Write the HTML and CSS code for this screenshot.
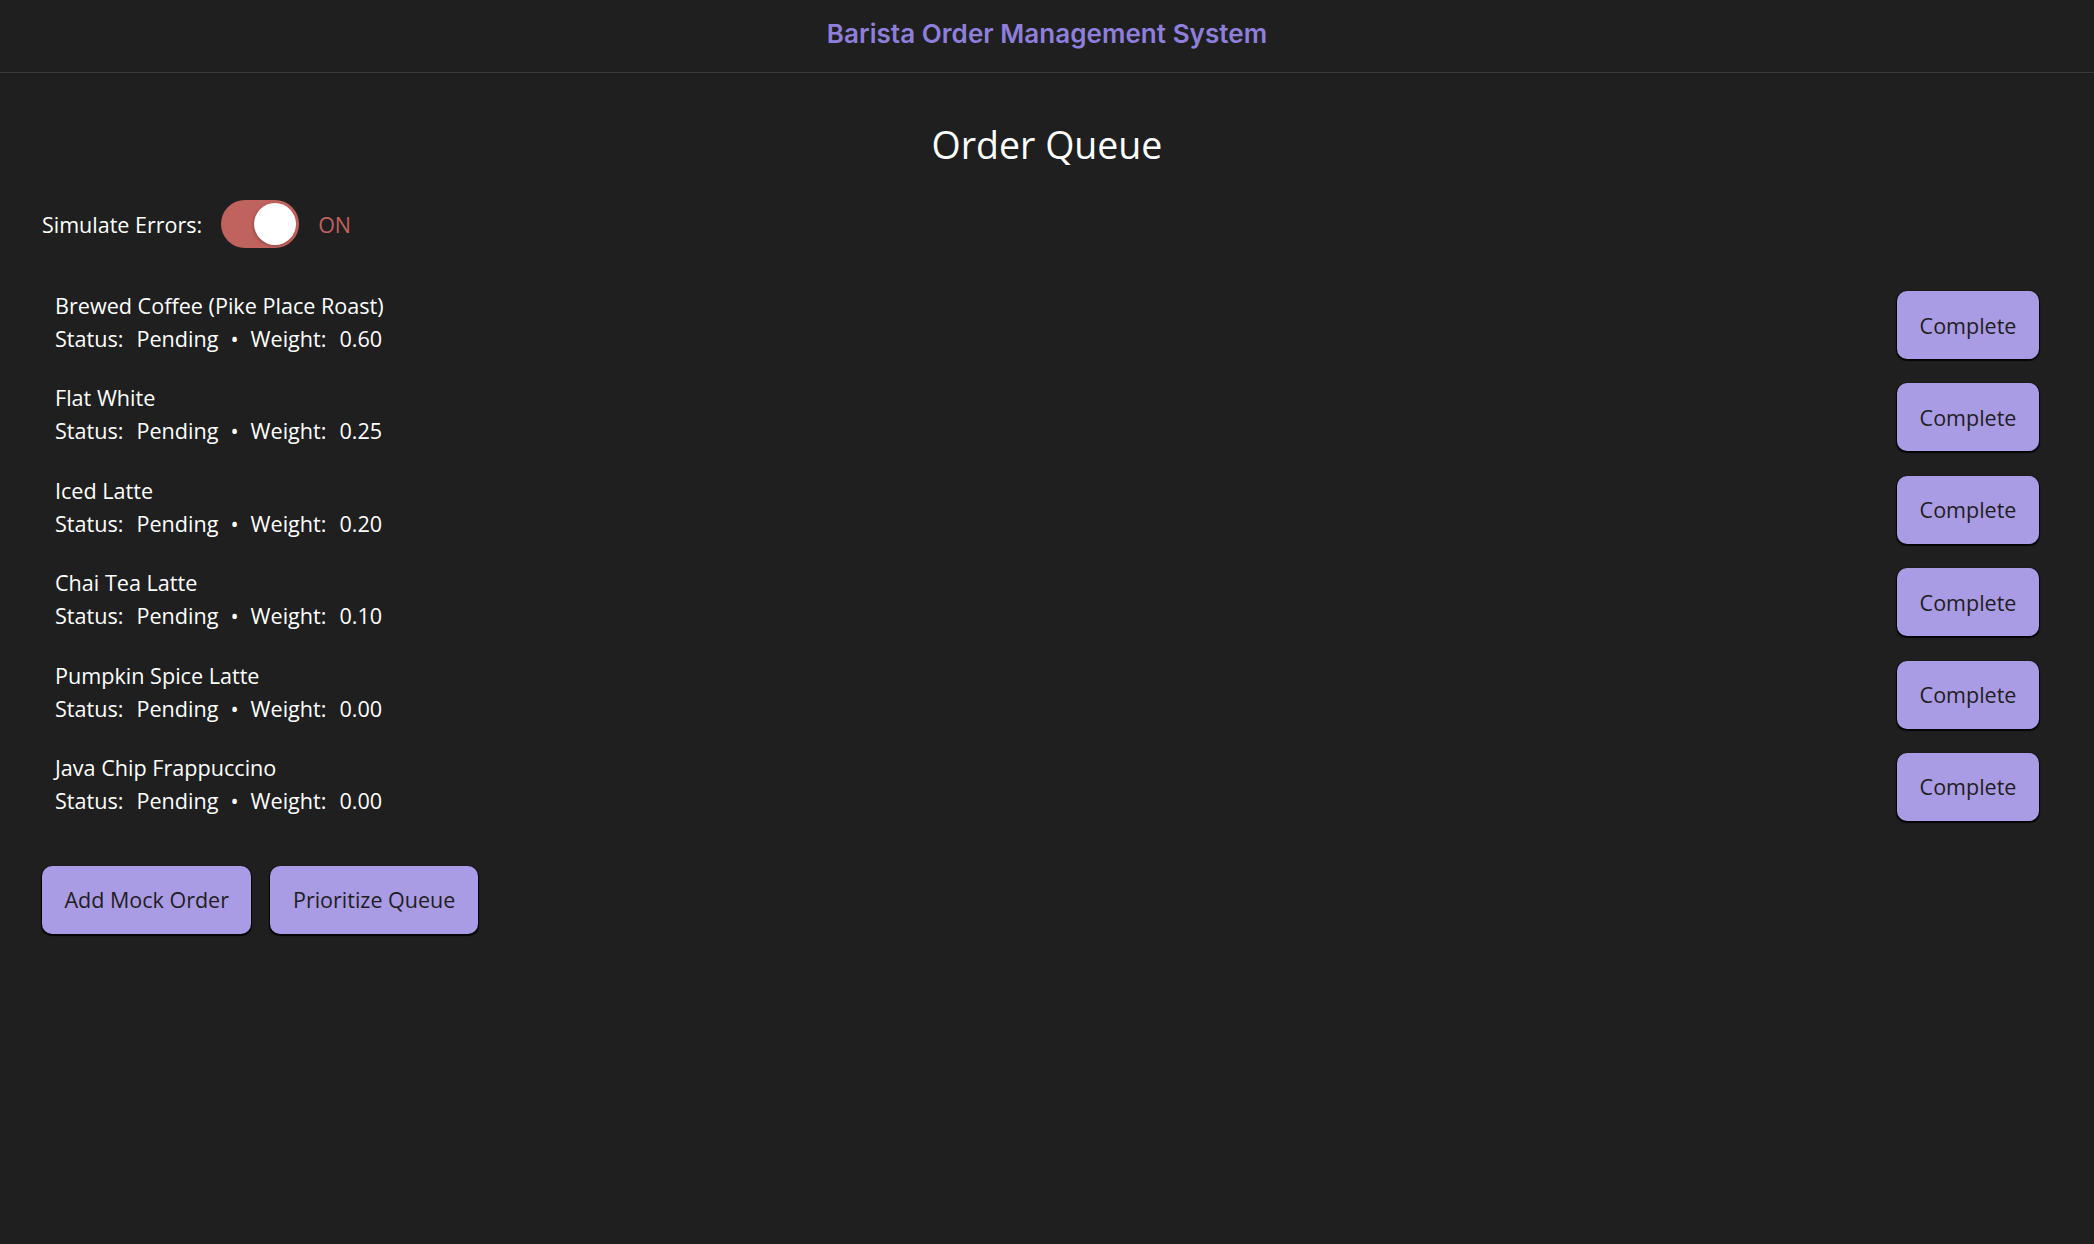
FILE: index.html
```html
<!DOCTYPE html>
<html lang="en">
<head>
<meta charset="utf-8">
<title>Barista Order Management System</title>
<link rel="stylesheet" href="styles.css">
</head>
<body>
<header class="topbar">
  <h1 class="brand">Barista Order Management System</h1>
</header>
<main class="content">
  <h2 class="title">Order Queue</h2>
  <div class="toggle-row">
    <span class="toggle-label">Simulate Errors:</span>
    <span class="switch"><span class="knob"></span></span>
    <span class="toggle-state">ON</span>
  </div>
  <ul class="orders">
    <li class="order">
      <div class="info">
        <div class="name">Brewed Coffee (Pike Place Roast)</div>
        <div class="meta"><span>Status:</span><span>Pending</span><span class="dot">•</span><span>Weight:</span><span>0.60</span></div>
      </div>
      <button class="btn">Complete</button>
    </li>
    <li class="order">
      <div class="info">
        <div class="name">Flat White</div>
        <div class="meta"><span>Status:</span><span>Pending</span><span class="dot">•</span><span>Weight:</span><span>0.25</span></div>
      </div>
      <button class="btn">Complete</button>
    </li>
    <li class="order">
      <div class="info">
        <div class="name">Iced Latte</div>
        <div class="meta"><span>Status:</span><span>Pending</span><span class="dot">•</span><span>Weight:</span><span>0.20</span></div>
      </div>
      <button class="btn">Complete</button>
    </li>
    <li class="order">
      <div class="info">
        <div class="name">Chai Tea Latte</div>
        <div class="meta"><span>Status:</span><span>Pending</span><span class="dot">•</span><span>Weight:</span><span>0.10</span></div>
      </div>
      <button class="btn">Complete</button>
    </li>
    <li class="order">
      <div class="info">
        <div class="name">Pumpkin Spice Latte</div>
        <div class="meta"><span>Status:</span><span>Pending</span><span class="dot">•</span><span>Weight:</span><span>0.00</span></div>
      </div>
      <button class="btn">Complete</button>
    </li>
    <li class="order">
      <div class="info">
        <div class="name">Java Chip Frappuccino</div>
        <div class="meta"><span>Status:</span><span>Pending</span><span class="dot">•</span><span>Weight:</span><span>0.00</span></div>
      </div>
      <button class="btn">Complete</button>
    </li>
  </ul>
  <div class="actions">
    <button class="btn">Add Mock Order</button>
    <button class="btn">Prioritize Queue</button>
  </div>
</main>
</body>
</html>
```
FILE: styles.css
```css
* { box-sizing: border-box; }
html, body {
  margin: 0;
  padding: 0;
  background: #1f1f1f;
  color: #ffffff;
  font-family: "Open Sans", "Liberation Sans", sans-serif;
  height: 100%;
}
.topbar {
  height: 73px;
  padding-bottom: 6px;
  border-bottom: 1px solid #3a3a3a;
  display: flex;
  align-items: center;
  justify-content: center;
}
.brand {
  margin: 0;
  font-family: Inter, "Liberation Sans", sans-serif;
  font-weight: 600;
  font-size: 26px;
  color: #8f7fdc;
  letter-spacing: 0.05px;
}
.content {
  padding: 0 42px;
}
.title {
  margin: 0;
  padding-top: 46px;
  text-align: center;
  font-weight: 400;
  font-size: 37.5px;
  line-height: 52px;
  color: #ffffff;
}
.toggle-row {
  display: flex;
  align-items: center;
  margin-top: 29px;
  height: 48px;
  font-size: 21.5px;
}
.toggle-label { margin-right: 19px; }
.switch {
  width: 78px;
  height: 48px;
  border-radius: 24px;
  background: #c0625e;
  position: relative;
  display: inline-block;
}
.knob {
  position: absolute;
  top: 3px;
  right: 3px;
  width: 42px;
  height: 42px;
  border-radius: 50%;
  background: #ffffff;
  box-shadow: -1px 1px 3px rgba(0,0,0,0.25);
}
.toggle-state {
  margin-left: 19px;
  color: #c0625e;
}
.orders {
  list-style: none;
  margin: 43px 0 0;
  padding: 0;
}
.order {
  display: flex;
  align-items: center;
  justify-content: space-between;
  padding: 0 13px;
  height: 68px;
  margin-bottom: 24.4px;
}
.info { font-size: 21.6px; line-height: 33px; padding-bottom: 6px; }
.meta { display: flex; }
.meta span:nth-child(1) { margin-right: 13px; }
.meta .dot { margin: 0 12px; }
.meta span:nth-child(4) { margin-right: 13px; }
.btn {
  height: 68px;
  padding: 0 22.5px;
  border: none;
  border-radius: 10px;
  background: #a99be4;
  color: #1e1e1e;
  font-family: "Open Sans", "Liberation Sans", sans-serif;
  font-size: 21.5px;
  box-shadow: 0 1px 1px 0.5px rgba(0,0,0,0.85);
  cursor: pointer;
}
.order .btn { width: 142px; padding: 0; }
.actions {
  display: flex;
  gap: 19px;
  margin-top: 45px;
}
```
